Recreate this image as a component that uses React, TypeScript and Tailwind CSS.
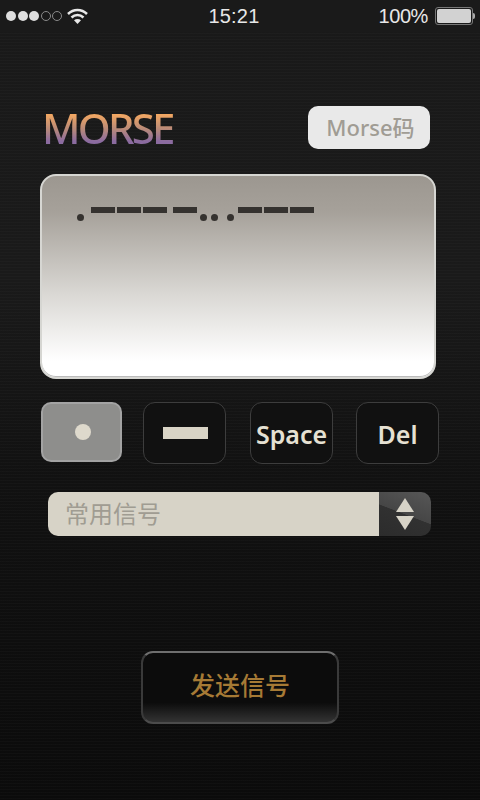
const SANS = "font-['Noto_Sans','Noto_Sans_CJK_SC',sans-serif]";

// code shown in the display, each token carries its own gap to the one before it
const MORSE_CODE = [
  { dot: true, gap: "ml-0" },
  { dot: false, gap: "ml-[7px]" },
  { dot: false, gap: "ml-[2px]" },
  { dot: false, gap: "ml-[2px]" },
  { dot: false, gap: "ml-[6px]" },
  { dot: true, gap: "ml-[3px]" },
  { dot: true, gap: "ml-[4px]" },
  { dot: true, gap: "ml-[9px]" },
  { dot: false, gap: "ml-[4px]" },
  { dot: false, gap: "ml-[2px]" },
  { dot: false, gap: "ml-[2px]" },
];

function StatusBar() {
  return (
    <div className="flex h-8 items-center bg-[#1a1a1a] pl-[6px] pr-[5px] font-['Liberation_Sans',sans-serif] text-[#e8e8e8]">
      <div className="flex w-[60px] items-center gap-[1.500px]">
        {[0, 1, 2].map((i) => (
          <span key={i} className="size-[10px] rounded-full bg-[#dedede]" />
        ))}
        {[3, 4].map((i) => (
          <span key={i} className="size-[10px] rounded-full border border-[#8a8a8a]" />
        ))}
      </div>
      <svg width="21" height="17" viewBox="0 0 21 17" className="ml-[1px]" aria-hidden>
        <path d="M1 6C6.500 0.500 14.500 0.500 20 6" fill="none" stroke="#e8e8e8" strokeWidth="2.500" />
        <path d="M4.500 9.500C8 6 13 6 16.500 9.500" fill="none" stroke="#e8e8e8" strokeWidth="2.500" />
        <path d="M7 12.300C9 10.500 12 10.500 14 12.300L10.500 16Z" fill="#e8e8e8" />
      </svg>
      <span className="ml-[120px] w-[52px] text-center text-[20px] leading-none tracking-[0.2px]">15:21</span>
      <span className="ml-auto text-[20px] leading-none tracking-[-0.4px]">100%</span>
      <div className="ml-[7px] flex items-center">
        <div className="flex h-[18px] w-[38px] items-center rounded-[3px] border border-[#777] p-[1px]">
          <div className="h-full w-full rounded-[2px] bg-[#d2d2d2]" />
        </div>
        <span className="h-[6px] w-[2px] rounded-r-sm bg-[#aaa]" />
      </div>
    </div>
  );
}

function MorseDisplay() {
  return (
    <div className="mt-[25px] ml-[40px] h-[205px] w-[396px] rounded-[16px] border-2 border-[#d6d6d2] bg-[linear-gradient(180deg,#9c9790_0%,#a6a19a_18%,#d9d7d3_58%,#ffffff_92%)] pt-[31px] pl-[35px] shadow-[inset_0_-1px_0_#bbb]">
      <div className="flex items-start">
        {MORSE_CODE.map((sym, i) =>
          sym.dot ? (
            <span key={i} className={`${sym.gap} mt-[7px] size-[7px] shrink-0 rounded-full bg-[#35322f]`} />
          ) : (
            <span key={i} className={`${sym.gap} h-[6px] w-[24px] shrink-0 bg-[#35322f]`} />
          ),
        )}
      </div>
    </div>
  );
}

function KeyRow() {
  const keyCls =
    "flex h-[62px] w-[83px] items-center justify-center rounded-[12px] border border-[#3d3d3d] bg-[#111] pt-[3px] text-[25px] font-semibold text-[#e6e1d3]";
  return (
    <div className={`mt-[23px] ml-[41px] flex items-start ${SANS}`}>
      <button className="flex h-[60px] w-[81px] items-center justify-center rounded-[10px] border-2 border-[#a3a3a3] bg-[#8e8e8c] pl-[3px]">
        <span className="size-[16px] rounded-full bg-[#ded9cc]" />
      </button>
      <button className={`${keyCls} ml-[21px] pl-[2px]`}>
        <span className="mb-[3px] h-[12px] w-[45px] bg-[#d9d4c6]" />
      </button>
      <button className={`${keyCls} ml-[24px]`}>Space</button>
      <button className={`${keyCls} ml-[23px]`}>Del</button>
    </div>
  );
}

function SignalSelect() {
  return (
    <div className={`mt-[28px] ml-[48px] flex h-[44px] w-[383px] overflow-hidden rounded-[10px] ${SANS}`}>
      <div className="flex flex-1 items-center bg-[#d7d3c7] pl-[17px] text-[24px] text-[#a09c92]">常用信号</div>
      <div className="flex w-[52px] items-center justify-center bg-[linear-gradient(201deg,#575757_0%,#464646_50%,#313131_51%,#2c2c2c_100%)]">
        <svg width="20" height="34" viewBox="0 0 20 34" aria-hidden>
          <path d="M10 1L19 15H1Z" fill="#d7d3c7" />
          <path d="M1 19H19L10 33Z" fill="#d7d3c7" />
        </svg>
      </div>
    </div>
  );
}

export default function App() {
  return (
    <div className="h-[800px] w-[480px] overflow-hidden bg-[repeating-linear-gradient(180deg,rgba(255,255,255,0.018)_0px,rgba(255,255,255,0.018)_1px,transparent_1px,transparent_3px),linear-gradient(180deg,#191919_0%,#1a1a1a_35%,#111_60%,#0b0b0b_100%)]">
      <StatusBar />
      <div className="mt-[74px] flex h-[43px] items-center pr-[50px] pl-[42px]">
        <span className="bg-[linear-gradient(180deg,#f2a762_18%,#b98a78_52%,#8b6ba0_82%)] bg-clip-text font-['Noto_Sans',sans-serif] text-[42px] font-medium leading-none tracking-[-2.800px] text-transparent">
          MORSE
        </span>
        <button
          className={`ml-auto flex h-[43px] w-[122px] items-center justify-center rounded-[10px] bg-[#e9e9e9] pl-[3px] text-[22px] font-medium text-[#a09c94] ${SANS}`}
        >
          Morse码
        </button>
      </div>
      <MorseDisplay />
      <KeyRow />
      <SignalSelect />
      <div className={`mt-[115px] flex justify-center ${SANS}`}>
        <button className="flex h-[73px] w-[198px] items-center justify-center rounded-[12px] border-2 border-[#3a3a3a] border-t-[#6f6f6f] border-b-[#4c4c4c] bg-[linear-gradient(180deg,#0c0c0c_0%,#0c0c0c_72%,#333_100%)] pb-[4px] text-[25px] font-medium text-[#a67a35]">
          发送信号
        </button>
      </div>
    </div>
  );
}
